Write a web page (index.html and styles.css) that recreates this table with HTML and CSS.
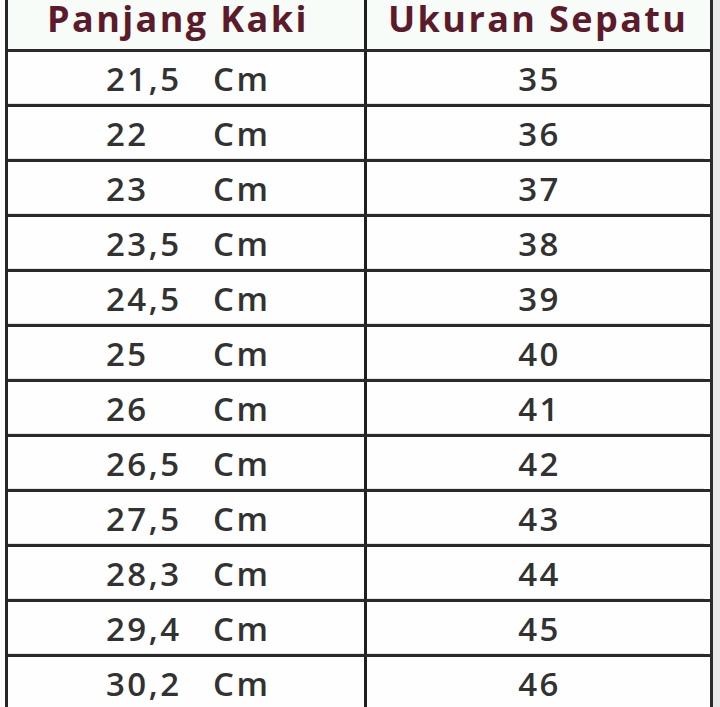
FILE: index.html
```html
<!DOCTYPE html>
<html>
<head>
<meta charset="utf-8">
<link rel="stylesheet" href="styles.css">
</head>
<body>
<div class="page">
  <div class="sheet">
    <div class="row head">
      <div class="cell left"><span class="h">Panjang Kaki</span></div>
      <div class="cell right"><span class="h">Ukuran Sepatu</span></div>
    </div>
    <div class="row"><div class="cell left"><span class="num">21,5</span><span class="unit">Cm</span></div><div class="cell right">35</div></div>
    <div class="row"><div class="cell left"><span class="num">22</span><span class="unit">Cm</span></div><div class="cell right">36</div></div>
    <div class="row"><div class="cell left"><span class="num">23</span><span class="unit">Cm</span></div><div class="cell right">37</div></div>
    <div class="row"><div class="cell left"><span class="num">23,5</span><span class="unit">Cm</span></div><div class="cell right">38</div></div>
    <div class="row"><div class="cell left"><span class="num">24,5</span><span class="unit">Cm</span></div><div class="cell right">39</div></div>
    <div class="row"><div class="cell left"><span class="num">25</span><span class="unit">Cm</span></div><div class="cell right">40</div></div>
    <div class="row"><div class="cell left"><span class="num">26</span><span class="unit">Cm</span></div><div class="cell right">41</div></div>
    <div class="row"><div class="cell left"><span class="num">26,5</span><span class="unit">Cm</span></div><div class="cell right">42</div></div>
    <div class="row"><div class="cell left"><span class="num">27,5</span><span class="unit">Cm</span></div><div class="cell right">43</div></div>
    <div class="row"><div class="cell left"><span class="num">28,3</span><span class="unit">Cm</span></div><div class="cell right">44</div></div>
    <div class="row"><div class="cell left"><span class="num">29,4</span><span class="unit">Cm</span></div><div class="cell right">45</div></div>
    <div class="row"><div class="cell left"><span class="num">30,2</span><span class="unit">Cm</span></div><div class="cell right">46</div></div>
  </div>
</div>
</body>
</html>
```
FILE: styles.css
```css
html, body {
  margin: 0;
  padding: 0;
  background: #e9eaea;
}
.page {
  width: 720px;
  height: 707px;
  overflow: hidden;
  background: linear-gradient(to right, #fdfefd 0, #fdfefd 707px, #e6e7e7 707px);
}
.sheet {
  margin-left: 5px;
  width: 702px;
  border-left: 3px solid #262626;
  border-right: 3px solid #2b2b2b;
  background: #fdfefd;
  font-family: "Open Sans", "Noto Sans", sans-serif;
}
.row {
  display: grid;
  grid-template-columns: 359px 337px;
  height: 52px;
  border-bottom: 3px solid #2a2a2a;
}
.row.head {
  height: 49px;
  background: #f8fcf9;
}
.cell {
  display: flex;
  align-items: center;
  font-size: 33px;
  font-weight: 600;
  color: #323232;
  letter-spacing: 2.5px;
  box-shadow: inset 0 -7px 0 -6px #e2e4e3;
}
.cell.left {
  border-right: 3px solid #1f1f1f;
  padding-left: 98px;
}
.cell.right {
  justify-content: center;
  padding-left: 8px;
}
.num {
  width: 107px;
}
.unit {
  letter-spacing: 2.5px;
}
.head .cell {
  box-shadow: none;
  align-items: flex-start;
}
.head .cell.left {
  padding-left: 39px;
}
.head .cell.right {
  justify-content: flex-start;
  padding-left: 21px;
}
.h {
  font-size: 36px;
  font-weight: 700;
  color: #5c1b2a;
  letter-spacing: 2.4px;
  line-height: 36px;
  padding-top: 1px;
}
```
